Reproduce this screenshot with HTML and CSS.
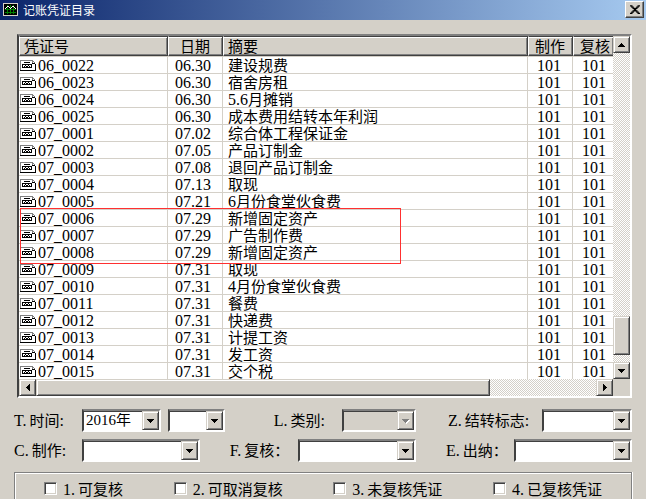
FILE: index.html
```
<!DOCTYPE html>
<html lang="zh-CN">
<head>
    <meta charset="UTF-8">
    <meta name="viewport" content="width=device-width, initial-scale=1.0">
    <title>记账凭证目录</title>
    <link rel="stylesheet" href="styles.css">
</head>
<body>
    <!-- Shared icons -->
    <svg class="sprite" aria-hidden="true">
        <symbol id="doc" viewBox="0 0 16 11" shape-rendering="crispEdges">
            <path d="M1 1h11l3 3v6H1z" fill="#fff"/>
            <path d="M0 0h13v1H1v9H0zM13 1h1v1h-1zM14 2h1v1h-1zM12 1h1v2h-1z" fill="#808080"/>
            <path d="M0 10h15V4h1v7H0zM12 3h3v1h-3zM4 2h6v1H4z" fill="#000"/>
            <path d="M2 4h10v4H2zM3 5v1h2V5zM6 5v1h2V5zM9 5v1h2V5zM3 6v1h1V6zM5 6v1h1V6zM8 6v1h1V6zM10 6v1h1V6z" fill="#000" fill-rule="evenodd"/>
        </symbol>
        <symbol id="up" viewBox="0 0 7 4" shape-rendering="crispEdges"><path d="M3 0h1v1h1v1h1v1h1v1H0V3h1V2h1V1h1z"/></symbol>
        <symbol id="down" viewBox="0 0 7 4" shape-rendering="crispEdges"><path d="M0 0h7v1H6v1H5v1H4v1H3V3H2V2H1V1H0z"/></symbol>
        <symbol id="left" viewBox="0 0 4 7" shape-rendering="crispEdges"><path d="M4 0v7H3V6H2V5H1V4H0V3h1V2h1V1h1V0z"/></symbol>
        <symbol id="right" viewBox="0 0 4 7" shape-rendering="crispEdges"><path d="M0 0h1v1h1v1h1v1h1v1H3v1H2v1H1v1H0z"/></symbol>
    </svg>

    <header class="titlebar">
        <svg class="app-icon" viewBox="0 0 15 13" shape-rendering="crispEdges" aria-hidden="true">
            <path fill="#d4d0c8" d="M0 0h15v13H0z"/>
            <path fill="#000" d="M1 1h13v11H1z"/>
            <path fill="#008000" d="M2 6h11v1H2zM2 9h11v1H2zM4 2h1v9H4zM7 2h1v9H7zM10 2h1v9h-1z"/>
            <path fill="#fff" d="M2 5h1v1H2zM3 4h1v1H3zM4 3h2v1H4zM6 4h1v1H6zM7 5h1v1H7zM8 4h1v1H8zM9 3h2v1H9zM11 4h1v1h-1zM12 5h1v1h-1z"/>
        </svg>
        <h1 class="title">记账凭证目录</h1>
        <button class="close" type="button" aria-label="关闭">
            <svg viewBox="0 0 8 7" width="10" height="9"><path d="M0 0h2v1h1v1h2V1h1V0h2v1H7v1H6v1H5v1h1v1h1v1h1v1H6V6H5V5H3v1H2v1H0V6h1V5h1V4h1V3H2V2H1V1H0z"/></svg>
        </button>
    </header>

    <main class="dialog">
        <section class="list">
            <table class="vouchers">
                <colgroup>
                    <col class="col-no"><col class="col-date"><col><col class="col-made"><col class="col-check">
                </colgroup>
                <thead>
                    <tr><th>凭证号</th><th class="th-date">日期</th><th>摘要</th><th class="th-user">制作</th><th class="th-user">复核</th></tr>
                </thead>
                <tbody>
                    <tr><td class="no"><svg class="doc"><use href="#doc"/></svg>06_0022</td><td class="date">06.30</td><td>建设规费</td><td class="user">101</td><td class="user">101</td></tr>
                    <tr><td class="no"><svg class="doc"><use href="#doc"/></svg>06_0023</td><td class="date">06.30</td><td>宿舍房租</td><td class="user">101</td><td class="user">101</td></tr>
                    <tr><td class="no"><svg class="doc"><use href="#doc"/></svg>06_0024</td><td class="date">06.30</td><td><span class="num">5.6</span>月摊销</td><td class="user">101</td><td class="user">101</td></tr>
                    <tr><td class="no"><svg class="doc"><use href="#doc"/></svg>06_0025</td><td class="date">06.30</td><td>成本费用结转本年利润</td><td class="user">101</td><td class="user">101</td></tr>
                    <tr><td class="no"><svg class="doc"><use href="#doc"/></svg>07_0001</td><td class="date">07.02</td><td>综合体工程保证金</td><td class="user">101</td><td class="user">101</td></tr>
                    <tr><td class="no"><svg class="doc"><use href="#doc"/></svg>07_0002</td><td class="date">07.05</td><td>产品订制金</td><td class="user">101</td><td class="user">101</td></tr>
                    <tr><td class="no"><svg class="doc"><use href="#doc"/></svg>07_0003</td><td class="date">07.08</td><td>退回产品订制金</td><td class="user">101</td><td class="user">101</td></tr>
                    <tr><td class="no"><svg class="doc"><use href="#doc"/></svg>07_0004</td><td class="date">07.13</td><td>取现</td><td class="user">101</td><td class="user">101</td></tr>
                    <tr><td class="no"><svg class="doc"><use href="#doc"/></svg>07_0005</td><td class="date">07.21</td><td><span class="num">6</span>月份食堂伙食费</td><td class="user">101</td><td class="user">101</td></tr>
                    <tr><td class="no"><svg class="doc"><use href="#doc"/></svg>07_0006</td><td class="date">07.29</td><td>新增固定资产</td><td class="user">101</td><td class="user">101</td></tr>
                    <tr><td class="no"><svg class="doc"><use href="#doc"/></svg>07_0007</td><td class="date">07.29</td><td>广告制作费</td><td class="user">101</td><td class="user">101</td></tr>
                    <tr><td class="no"><svg class="doc"><use href="#doc"/></svg>07_0008</td><td class="date">07.29</td><td>新增固定资产</td><td class="user">101</td><td class="user">101</td></tr>
                    <tr><td class="no"><svg class="doc"><use href="#doc"/></svg>07_0009</td><td class="date">07.31</td><td>取现</td><td class="user">101</td><td class="user">101</td></tr>
                    <tr><td class="no"><svg class="doc"><use href="#doc"/></svg>07_0010</td><td class="date">07.31</td><td><span class="num">4</span>月份食堂伙食费</td><td class="user">101</td><td class="user">101</td></tr>
                    <tr><td class="no"><svg class="doc"><use href="#doc"/></svg>07_0011</td><td class="date">07.31</td><td>餐费</td><td class="user">101</td><td class="user">101</td></tr>
                    <tr><td class="no"><svg class="doc"><use href="#doc"/></svg>07_0012</td><td class="date">07.31</td><td>快递费</td><td class="user">101</td><td class="user">101</td></tr>
                    <tr><td class="no"><svg class="doc"><use href="#doc"/></svg>07_0013</td><td class="date">07.31</td><td>计提工资</td><td class="user">101</td><td class="user">101</td></tr>
                    <tr><td class="no"><svg class="doc"><use href="#doc"/></svg>07_0014</td><td class="date">07.31</td><td>发工资</td><td class="user">101</td><td class="user">101</td></tr>
                    <tr><td class="no"><svg class="doc"><use href="#doc"/></svg>07_0015</td><td class="date">07.31</td><td>交个税</td><td class="user">101</td><td class="user">101</td></tr>
                </tbody>
            </table>

            <div class="scroll scroll-v">
                <button class="raised" type="button" aria-label="向上"><svg width="7" height="4"><use href="#up"/></svg></button>
                <div class="track track-before"></div>
                <div class="raised thumb"></div>
                <div class="track track-after"></div>
                <button class="raised" type="button" aria-label="向下"><svg width="7" height="4"><use href="#down"/></svg></button>
            </div>

            <div class="scroll scroll-h">
                <button class="raised" type="button" aria-label="向左"><svg width="4" height="7"><use href="#left"/></svg></button>
                <div class="raised thumb"></div>
                <div class="track track-after"></div>
                <button class="raised" type="button" aria-label="向右"><svg width="4" height="7"><use href="#right"/></svg></button>
            </div>

            <!-- Red frame over rows 0006 - 0008 -->
            <div class="mark"></div>
        </section>

        <form class="filters">
            <div class="field">
                <label for="year"><span class="num key">T.</span>时间<span class="num">:</span></label>
                <div class="combo combo-year"><select id="year"><option>2016年</option></select><span class="raised arrow"><svg width="7" height="4"><use href="#down"/></svg></span></div>
                <div class="combo combo-month"><select id="month" aria-label="月份"><option></option></select><span class="raised arrow"><svg width="7" height="4"><use href="#down"/></svg></span></div>
            </div>
            <div class="field">
                <label for="kind"><span class="num key">L.</span>类别<span class="num">:</span></label>
                <div class="combo combo-kind disabled"><select id="kind" disabled><option></option></select><span class="raised arrow"><svg width="7" height="4"><use href="#down"/></svg></span></div>
            </div>
            <div class="field">
                <label class="wide" for="flag"><span class="num key">Z.</span>结转标志<span class="num">:</span></label>
                <div class="combo combo-flag"><select id="flag"><option></option></select><span class="raised arrow"><svg width="7" height="4"><use href="#down"/></svg></span></div>
            </div>
            <div class="field">
                <label for="maker"><span class="num key">C.</span>制作<span class="num">:</span></label>
                <div class="combo"><select id="maker"><option></option></select><span class="raised arrow"><svg width="7" height="4"><use href="#down"/></svg></span></div>
            </div>
            <div class="field">
                <label for="checker"><span class="num key">F.</span>复核：</label>
                <div class="combo"><select id="checker"><option></option></select><span class="raised arrow"><svg width="7" height="4"><use href="#down"/></svg></span></div>
            </div>
            <div class="field">
                <label for="cashier"><span class="num key">E.</span>出纳：</label>
                <div class="combo"><select id="cashier"><option></option></select><span class="raised arrow"><svg width="7" height="4"><use href="#down"/></svg></span></div>
            </div>
        </form>

        <div class="options">
            <label class="check"><input type="checkbox"><span><span class="num key">1.</span>可复核</span></label>
            <label class="check"><input type="checkbox"><span><span class="num key">2.</span>可取消复核</span></label>
            <label class="check"><input type="checkbox"><span><span class="num key">3.</span>未复核凭证</span></label>
            <label class="check"><input type="checkbox"><span><span class="num key">4.</span>已复核凭证</span></label>
        </div>
    </main>
</body>
</html>
```
FILE: styles.css
```
:root {
    --face: #d4d0c8;
    --light: #ffffff;
    --shadow: #808080;
    --dark: #404040;
    --font-cjk: 'Noto Sans CJK SC', sans-serif;
    --font-num: 'Liberation Serif', 'Noto Sans CJK SC', serif;
}

* {
    margin: 0;
    padding: 0;
    box-sizing: border-box;
}

body {
    display: flex;
    flex-direction: column;
    height: 100vh;
    overflow: hidden;
    background: var(--face);
    color: #000;
    font-family: var(--font-cjk);
    font-size: 15px;
    font-weight: 400;
    line-height: 15px;
}

button, select {
    font: inherit;
    color: inherit;
}

.sprite {
    display: none;
}

.num, .no, .date, .user {
    font-family: var(--font-num);
    font-size: 16px;
}

.num {
    line-height: 0;
}

.key {
    margin-right: 3px;
}

/* Title bar */
.titlebar {
    display: flex;
    align-items: center;
    gap: 5px;
    height: 20px;
    flex-shrink: 0;
    padding: 0 2px 1px 3px;
    background: linear-gradient(90deg, #0a246a, #a6caf0);
}

.app-icon {
    width: 15px;
    height: 13px;
}

.title {
    flex: 1;
    color: #fff;
    font-size: 12px;
    font-weight: 400;
}

.close, .raised {
    display: flex;
    align-items: center;
    justify-content: center;
    flex-shrink: 0;
    background: var(--face);
    border: 1px solid;
    border-color: var(--face) var(--dark) var(--dark) var(--face);
    box-shadow: inset 1px 1px var(--light), inset -1px -1px var(--shadow);
}

.close {
    width: 19px;
    height: 17px;
    border-color: var(--light) var(--dark) var(--dark) var(--light);
    box-shadow: inset -1px -1px var(--shadow);
}

.dialog {
    display: flex;
    flex-direction: column;
    flex: 1;
    min-height: 0;
    padding: 14px 14px 0;
}

/* Voucher list */
.list {
    position: relative;
    display: grid;
    grid-template-columns: 1fr 17px;
    margin-left: 3px;
    border: 2px solid;
    border-color: var(--shadow) var(--light) var(--light) var(--dark);
}

.vouchers {
    width: 100%;
    table-layout: fixed;
    border-spacing: 0;
    background: #fff;
}

.col-no { width: 149px; }
.col-date { width: 55px; }
.col-made { width: 45px; }
.col-check { width: 40px; }

.vouchers th {
    height: 20px;
    padding: 0 0 1px 4px;
    overflow: hidden;
    background: var(--face);
    border: 1px solid;
    border-color: var(--dark) var(--dark) var(--dark) var(--light);
    box-shadow: inset 0 1px var(--light), inset -1px -1px var(--shadow);
    font-weight: 400;
    text-align: left;
    white-space: nowrap;
}

.vouchers th:last-child {
    border-right: 0;
}

.vouchers .th-date {
    padding-left: 11px;
}

.vouchers .th-user {
    padding-left: 6px;
}

.vouchers td {
    height: 17px;
    padding: 0 0 1px 5px;
    border-top: 1px solid var(--face);
    border-right: 1px solid var(--face);
    white-space: nowrap;
}

.vouchers td:last-child {
    border-right: 0;
}

.vouchers .no {
    padding: 0 0 0 1px;
}

.vouchers .date {
    padding: 0 0 0 7px;
}

.vouchers .user {
    padding: 0 0 0 9px;
}

.doc {
    display: inline-block;
    width: 16px;
    height: 11px;
    margin-right: 2px;
}

.mark {
    position: absolute;
    top: 172px;
    left: 1px;
    width: 381px;
    height: 56px;
    border: 1px solid #ff3030;
    pointer-events: none;
}

/* Scroll bars */
.scroll {
    display: flex;
}

.scroll-v {
    flex-direction: column;
}

.scroll .raised {
    width: 17px;
    height: 17px;
}

.scroll-v .thumb {
    height: 39px;
}

.track {
    background: repeating-conic-gradient(var(--face) 0 25%, #fff 0 50%) 0 0 / 2px 2px;
}

.scroll-v .track-before { flex: 263; }
.scroll-v .track-after { flex: 7; }
.scroll-h .thumb { flex: 454; }
.scroll-h .track-after { flex: 107; }

/* Filters */
.filters {
    display: grid;
    grid-template-columns: 211fr 190fr 216fr;
    row-gap: 7px;
    margin-top: 11px;
}

.field {
    display: flex;
    align-items: center;
    justify-content: flex-end;
}

.field:nth-child(3n + 1) {
    justify-content: flex-start;
}

.field label {
    width: 68px;
    padding-bottom: 2px;
    white-space: nowrap;
}

.field .wide {
    width: 94px;
}

.combo {
    display: flex;
    width: 118px;
    height: 23px;
    background: #fff;
    border: 2px solid;
    border-color: var(--shadow) var(--light) var(--light) var(--dark);
    box-shadow: inset 0 1px var(--dark);
}

.combo select {
    flex: 1;
    min-width: 0;
    padding-left: 2px;
    appearance: none;
    background: transparent;
    border: 0;
    font-family: var(--font-num);
    font-size: 15px;
}

.combo .arrow {
    width: 17px;
    pointer-events: none;
}

.combo-year { width: 79px; }
.combo-month { width: 57px; margin-left: 7px; }
.combo-kind { width: 74px; }
.combo-flag { width: 90px; }

.disabled {
    background: var(--face);
}

.disabled svg {
    fill: var(--shadow);
    filter: drop-shadow(1px 1px 0 #fff);
}

/* Check boxes */
.options {
    display: flex;
    align-items: flex-start;
    justify-content: space-between;
    flex: 1;
    margin-top: 10px;
    padding: 8px 29px 0;
    border: 1px solid var(--shadow);
    border-bottom: 0;
    box-shadow: inset 1px 1px var(--light), 1px 0 var(--light);
}

.check {
    display: flex;
    align-items: center;
    gap: 6px;
    white-space: nowrap;
}

.check input {
    width: 13px;
    height: 13px;
    appearance: none;
    background: #fff;
    border: 1px solid;
    border-color: var(--shadow) var(--light) var(--light) var(--shadow);
    box-shadow: inset 1px 1px var(--dark), inset -1px -1px var(--face);
}
```
